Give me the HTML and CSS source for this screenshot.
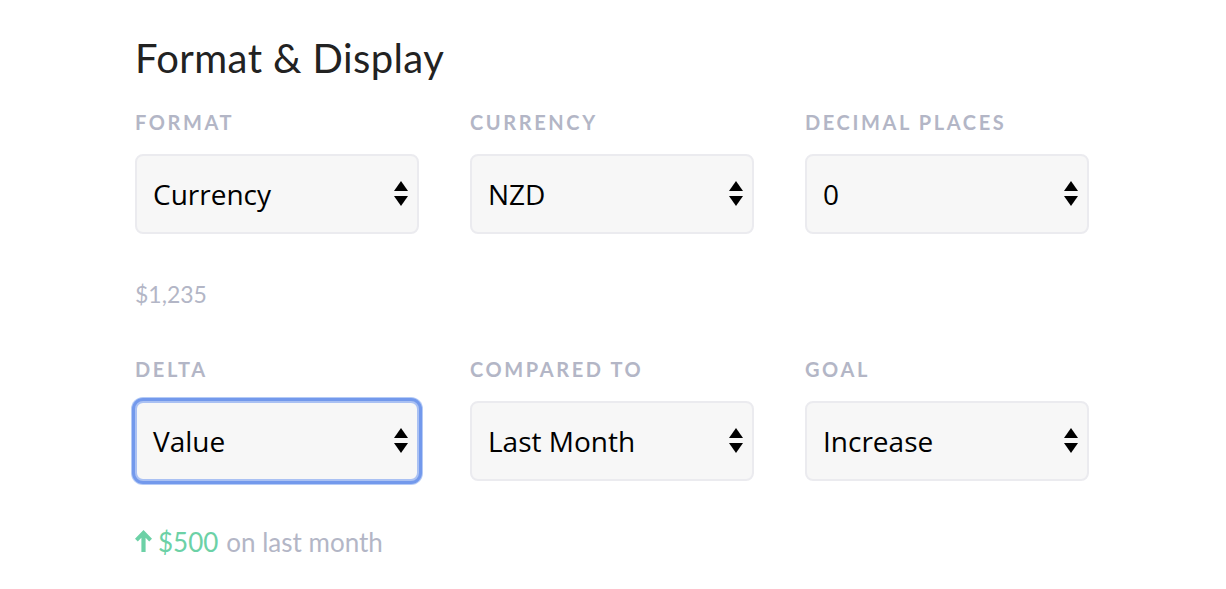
FILE: index.html
```html
<!DOCTYPE html>
<html>
<head>
<meta charset="utf-8">
<link rel="stylesheet" href="styles.css">
</head>
<body>
<div class="page">
  <h1 class="title">Format &amp; Display</h1>
  <div class="grid">
    <div class="field">
      <div class="label">FORMAT</div>
      <div class="select"><span>Currency</span><svg class="arrows" width="14" height="26" viewBox="0 0 14 26"><path d="M7 0 L14 10 L0 10 Z" fill="#000"/><path d="M0 15 L14 15 L7 25 Z" fill="#000"/></svg></div>
    </div>
    <div class="field">
      <div class="label">CURRENCY</div>
      <div class="select"><span>NZD</span><svg class="arrows" width="14" height="26" viewBox="0 0 14 26"><path d="M7 0 L14 10 L0 10 Z" fill="#000"/><path d="M0 15 L14 15 L7 25 Z" fill="#000"/></svg></div>
    </div>
    <div class="field">
      <div class="label">DECIMAL PLACES</div>
      <div class="select"><span>0</span><svg class="arrows" width="14" height="26" viewBox="0 0 14 26"><path d="M7 0 L14 10 L0 10 Z" fill="#000"/><path d="M0 15 L14 15 L7 25 Z" fill="#000"/></svg></div>
    </div>
  </div>
  <div class="preview">$1,235</div>
  <div class="grid">
    <div class="field">
      <div class="label">DELTA</div>
      <div class="select focused"><span>Value</span><svg class="arrows" width="14" height="26" viewBox="0 0 14 26"><path d="M7 0 L14 10 L0 10 Z" fill="#000"/><path d="M0 15 L14 15 L7 25 Z" fill="#000"/></svg></div>
    </div>
    <div class="field">
      <div class="label">COMPARED TO</div>
      <div class="select"><span>Last Month</span><svg class="arrows" width="14" height="26" viewBox="0 0 14 26"><path d="M7 0 L14 10 L0 10 Z" fill="#000"/><path d="M0 15 L14 15 L7 25 Z" fill="#000"/></svg></div>
    </div>
    <div class="field">
      <div class="label">GOAL</div>
      <div class="select"><span>Increase</span><svg class="arrows" width="14" height="26" viewBox="0 0 14 26"><path d="M7 0 L14 10 L0 10 Z" fill="#000"/><path d="M0 15 L14 15 L7 25 Z" fill="#000"/></svg></div>
    </div>
  </div>
  <div class="delta">
    <svg class="up" width="17" height="22" viewBox="0 0 17 22"><path d="M8.5 0 L17 8.7 L14.2 11.5 L10.6 7.8 L10.6 22 L6.4 22 L6.4 7.8 L2.8 11.5 L0 8.7 Z" fill="#6cd1a6"/></svg><span class="green">$500</span> on last month
  </div>
</div>
</body>
</html>
```

FILE: styles.css
```css
* { box-sizing: border-box; }
html, body { margin: 0; padding: 0; background: #fff; }
body { font-family: Lato, "Noto Sans", sans-serif; }
.page {
  padding: 34px 0 0 135px;
  width: 1226px;
  height: 589px;
}
.title {
  margin: 0;
  font-size: 40px;
  font-weight: 400;
  color: #222;
  line-height: 48px;
  letter-spacing: 0.4px;
}
.grid {
  display: grid;
  grid-template-columns: 284px 284px 284px;
  column-gap: 51px;
}
.label {
  font-size: 20px;
  font-weight: 700;
  letter-spacing: 2.6px;
  color: #b3b6c6;
  line-height: 24px;
  margin-top: 28px;
}
.select {
  margin-top: 20px;
  height: 80px;
  border: 2px solid #ebebef;
  border-radius: 8px;
  background: #f7f7f7;
  display: flex;
  align-items: center;
  justify-content: space-between;
  padding: 0 9px 0 16px;
  font-family: "Open Sans", Lato, sans-serif;
  font-size: 28px;
  color: #000;
}
.select span { padding-top: 0; }
.select.focused {
  border: 2px solid #aac1f3;
  box-shadow: 0 0 0 3px #7399ec, 0 0 0 4px #b5cbf6;
}
.arrows { display: block; }
.preview {
  margin-top: 45px;
  font-size: 23px;
  color: #b3b6c6;
  line-height: 30px;
}
.preview + .grid .label { margin-top: 48px; }
.delta {
  margin-top: 46px;
  font-size: 26px;
  color: #b3b6c6;
  display: flex;
  align-items: center;
  line-height: 30px;
}
.up { margin-right: 6px; margin-top: -2px; }
.green { color: #6cd1a6; margin-right: 8px; }
```
